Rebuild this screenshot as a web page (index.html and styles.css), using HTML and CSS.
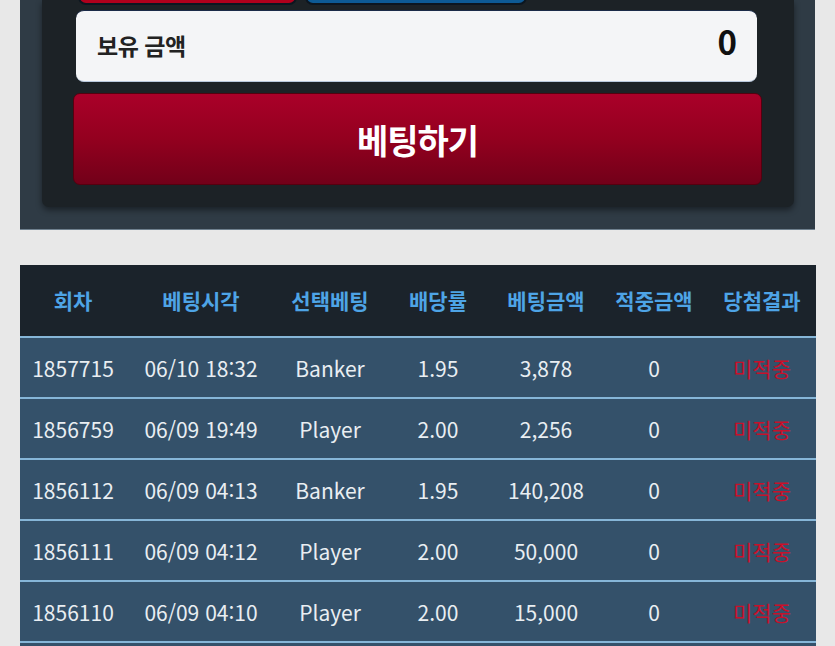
FILE: index.html
```html
<!DOCTYPE html>
<html lang="ko">
<head>
<meta charset="utf-8">
<title>베팅</title>
<link rel="stylesheet" href="styles.css">
</head>
<body>
<section class="bet-panel">
  <div class="bet-inner">
    <div class="pick-row">
      <div class="pick pick-banker"></div>
      <div class="pick pick-player"></div>
    </div>
    <div class="balance">
      <span class="balance-label">보유 금액</span>
      <span class="balance-value">0</span>
    </div>
    <button class="bet-button">베팅하기</button>
  </div>
</section>

<table class="history">
  <colgroup>
    <col class="c1"><col class="c2"><col class="c3"><col class="c4"><col class="c5"><col class="c6"><col class="c7">
  </colgroup>
  <thead>
    <tr><th>회차</th><th>베팅시각</th><th>선택베팅</th><th>배당률</th><th>베팅금액</th><th>적중금액</th><th>당첨결과</th></tr>
  </thead>
  <tbody>
    <tr><td>1857715</td><td>06/10 18:32</td><td>Banker</td><td>1.95</td><td>3,878</td><td>0</td><td class="lose">미적중</td></tr>
    <tr><td>1856759</td><td>06/09 19:49</td><td>Player</td><td>2.00</td><td>2,256</td><td>0</td><td class="lose">미적중</td></tr>
    <tr><td>1856112</td><td>06/09 04:13</td><td>Banker</td><td>1.95</td><td>140,208</td><td>0</td><td class="lose">미적중</td></tr>
    <tr><td>1856111</td><td>06/09 04:12</td><td>Player</td><td>2.00</td><td>50,000</td><td>0</td><td class="lose">미적중</td></tr>
    <tr><td>1856110</td><td>06/09 04:10</td><td>Player</td><td>2.00</td><td>15,000</td><td>0</td><td class="lose">미적중</td></tr>
    <tr class="more"><td></td><td></td><td></td><td></td><td></td><td></td><td></td></tr>
  </tbody>
</table>
</body>
</html>
```

FILE: styles.css
```css
* { box-sizing: border-box; }

html, body {
  margin: 0;
  padding: 0;
  background: #e8e8e8;
  font-family: "Noto Sans CJK KR", "Noto Sans", sans-serif;
  overflow: hidden;
}

.bet-panel {
  margin: 0 20px;
  width: 795px;
  background: #2f3b45;
  padding: 0 21px 22px 22px;
  border-bottom: 1px solid #6f808e;
}

.bet-inner {
  background: #1c2226;
  border-radius: 0 0 7px 7px;
  box-shadow: 0 3px 6px rgba(0, 0, 0, 0.45);
  padding: 0 32px 22px 31px;
}

.pick-row {
  display: flex;
  gap: 8px;
  height: 5px;
  padding-left: 5px;
  overflow: hidden;
  margin-bottom: 5px;
}

.pick {
  height: 40px;
  margin-top: -35px;
  border-radius: 8px;
  border: 2px solid #0c1620;
}

.pick-banker { width: 219px; background: #b0001c; }
.pick-player { width: 222px; background: #0d5a95; }

.balance {
  margin: 0 5px 0 3px;
  height: 72px;
  background: #f4f5f7;
  border-radius: 8px;
  border-top: 1px solid #1a2a48;
  border-bottom: 1px solid #b8c8dc;
  display: flex;
  align-items: center;
  justify-content: space-between;
  padding: 0 20px 10px 21px;
}

.balance-label {
  font-size: 23px;
  font-weight: 700;
  color: #222;
  padding-top: 8px;
  letter-spacing: -0.5px;
}

.balance-value {
  font-size: 33px;
  font-weight: 700;
  color: #111;
}

.bet-button {
  display: block;
  width: 100%;
  height: 92px;
  margin-top: 11px;
  border: 1px solid #55000f;
  border-radius: 7px;
  background: linear-gradient(to bottom, #aa0029 0%, #93001f 50%, #720019 100%);
  color: #fff;
  font-family: "Noto Sans CJK KR", "Noto Sans", sans-serif;
  font-size: 34px;
  font-weight: 700;
  letter-spacing: -1px;
  cursor: pointer;
}

.history {
  margin: 35px 20px 0;
  width: 795px;
  table-layout: fixed;
  border-collapse: separate;
  border-spacing: 0;
}

.c1 { width: 106px; }
.c2 { width: 150px; }
.c3, .c4, .c5, .c6, .c7 { width: 108px; }

.history th {
  height: 73px;
  background: #1b232b;
  color: #4ea4e6;
  font-size: 21px;
  font-weight: 700;
  text-align: center;
  border-bottom: 2px solid #86b6d8;
  padding: 0 0 2px;
}

.history td {
  height: 61px;
  background: #34516a;
  color: #e9eef2;
  font-size: 21px;
  font-weight: 400;
  text-align: center;
  border-bottom: 2px solid #86b6d8;
  padding: 0;
}

.history td.lose {
  color: #c8102a;
}
```
